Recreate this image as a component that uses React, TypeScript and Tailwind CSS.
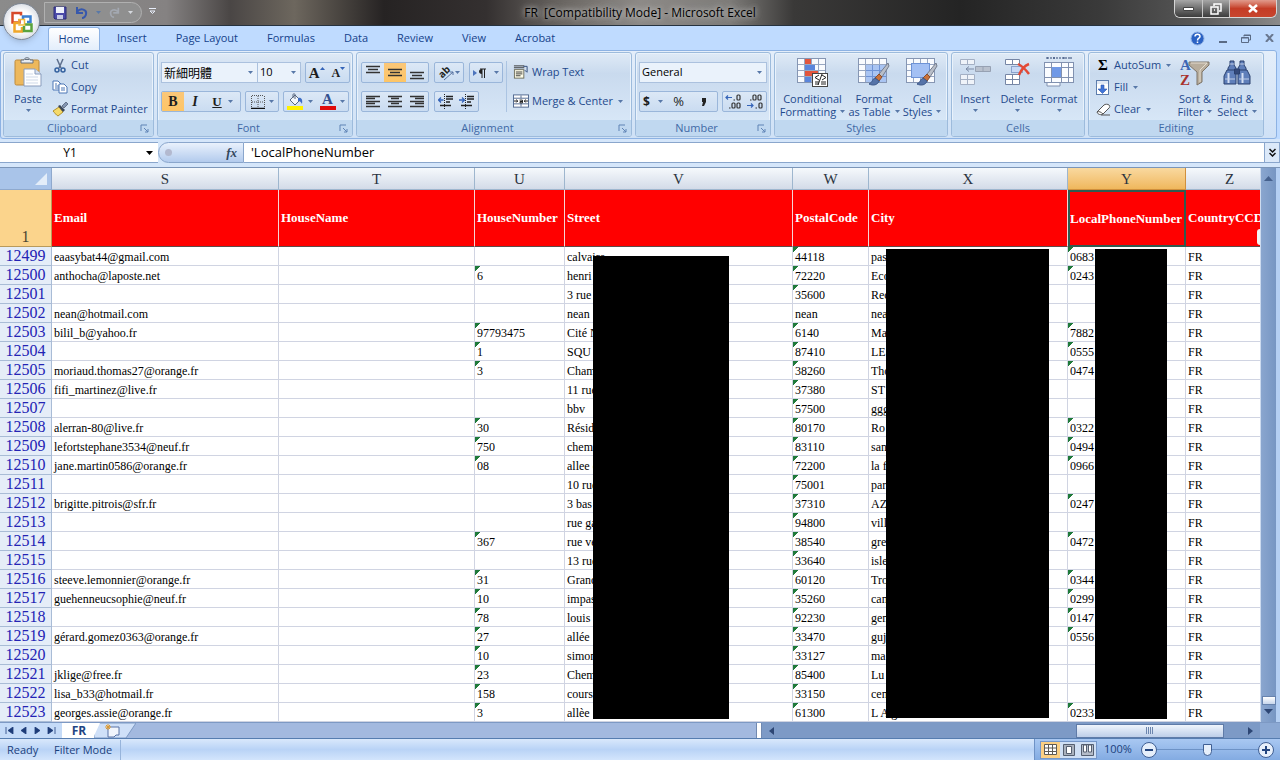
import { ReactNode } from 'react';

interface Row {
  n: number;
  email: string;
  house: string;
  street: string;
  postal: string;
  city: string;
  phone: string;
}

const TABS = ['Insert', 'Page Layout', 'Formulas', 'Data', 'Review', 'View', 'Acrobat'];

const COLUMNS = [
  { letter: 'S', name: 'Email' },
  { letter: 'T', name: 'HouseName' },
  { letter: 'U', name: 'HouseNumber' },
  { letter: 'V', name: 'Street' },
  { letter: 'W', name: 'PostalCode' },
  { letter: 'X', name: 'City' },
  { letter: 'Y', name: 'LocalPhoneNumber' },
  { letter: 'Z', name: 'CountryCCD' },
];

const ROWS: Row[] = [
  { n: 12499, email: 'eaasybat44@gmail.com', house: '', street: 'calvaire', postal: '44118', city: 'pas', phone: '0683' },
  { n: 12500, email: 'anthocha@laposte.net', house: '6', street: 'henri', postal: '72220', city: 'Eco', phone: '0243' },
  { n: 12501, email: '', house: '', street: '3 rue', postal: '35600', city: 'Rec', phone: '' },
  { n: 12502, email: 'nean@hotmail.com', house: '', street: 'nean', postal: 'nean', city: 'nea', phone: '' },
  { n: 12503, email: 'bilil_b@yahoo.fr', house: '97793475', street: 'Cité N', postal: '6140', city: 'Ma', phone: '7882' },
  { n: 12504, email: '', house: '1', street: 'SQU', postal: '87410', city: 'LE', phone: '0555' },
  { n: 12505, email: 'moriaud.thomas27@orange.fr', house: '3', street: 'Cham', postal: '38260', city: 'Tho', phone: '0474' },
  { n: 12506, email: 'fifi_martinez@live.fr', house: '', street: '11 rue', postal: '37380', city: 'ST', phone: '' },
  { n: 12507, email: '', house: '', street: 'bbv', postal: '57500', city: 'ggg', phone: '' },
  { n: 12508, email: 'alerran-80@live.fr', house: '30', street: 'Résid', postal: '80170', city: 'Ro', phone: '0322' },
  { n: 12509, email: 'lefortstephane3534@neuf.fr', house: '750', street: 'chem', postal: '83110', city: 'san', phone: '0494' },
  { n: 12510, email: 'jane.martin0586@orange.fr', house: '08', street: 'allee d', postal: '72200', city: 'la f', phone: '0966' },
  { n: 12511, email: '', house: '', street: '10 rue', postal: '75001', city: 'par', phone: '' },
  { n: 12512, email: 'brigitte.pitrois@sfr.fr', house: '', street: '3 bas', postal: '37310', city: 'AZ', phone: '0247' },
  { n: 12513, email: '', house: '', street: 'rue ga', postal: '94800', city: 'vill', phone: '' },
  { n: 12514, email: '', house: '367', street: 'rue ve', postal: '38540', city: 'gre', phone: '0472' },
  { n: 12515, email: '', house: '', street: '13 rue', postal: '33640', city: 'isle', phone: '' },
  { n: 12516, email: 'steeve.lemonnier@orange.fr', house: '31', street: 'Grand', postal: '60120', city: 'Tro', phone: '0344' },
  { n: 12517, email: 'guehenneucsophie@neuf.fr', house: '10', street: 'impas', postal: '35260', city: 'can', phone: '0299' },
  { n: 12518, email: '', house: '78', street: 'louis', postal: '92230', city: 'gen', phone: '0147' },
  { n: 12519, email: 'gérard.gomez0363@orange.fr', house: '27', street: 'allée', postal: '33470', city: 'guj', phone: '0556' },
  { n: 12520, email: '', house: '10', street: 'simon', postal: '33127', city: 'ma', phone: '' },
  { n: 12521, email: 'jklige@free.fr', house: '23', street: 'Chem', postal: '85400', city: 'Lu', phone: '' },
  { n: 12522, email: 'lisa_b33@hotmail.fr', house: '158', street: 'cours', postal: '33150', city: 'cen', phone: '' },
  { n: 12523, email: 'georges.assie@orange.fr', house: '3', street: 'allèe', postal: '61300', city: 'L A g', phone: '0233' },
];

function Arrow({ className = '' }: { className?: string }) {
  return (
    <svg viewBox="0 0 5 3" className={`w-[5px] h-[3px] shrink-0 fill-[#5878a8] ${className}`}>
      <path d="M0 0h5L2.500 3z" />
    </svg>
  );
}

function Group({ title, width, launcher, children }: { title: string; width: string; launcher?: boolean; children: ReactNode }) {
  return (
    <section
      className={`${width} shrink-0 h-[85px] flex flex-col rounded-[3px] border border-[#9dbbdc] bg-linear-to-b from-[#dfeaf6] from-0% via-[#c9daee] via-25% to-[#dcebfa] shadow-[inset_0_0_0_1px_#e9f2fb] overflow-hidden`}
    >
      <div className="flex-1 flex min-h-0">{children}</div>
      <div className="h-4 shrink-0 bg-[#c0d8f0] flex items-center text-[#3f69a6] text-[11px] leading-4">
        <span className="flex-1 text-center">{title}</span>
        {launcher && (
          <button aria-label={`${title} options`} className="mr-1">
            <svg viewBox="0 0 9 9" className="w-[9px] h-[9px]" fill="none" stroke="#5f83b5">
              <path d="M1 7V1h6M4 4l4 4M8 5v3H5" />
            </svg>
          </button>
        )}
      </div>
    </section>
  );
}

function Box({ width, children }: { width: string; children: ReactNode }) {
  return (
    <div className={`${width} h-[21px] shrink-0 flex rounded-[2px] border border-[#9ab6da] bg-linear-to-b from-[#dce8f6] to-[#cadcf1] overflow-hidden`}>
      {children}
    </div>
  );
}

function Tool({ label, on, children }: { label: string; on?: boolean; children: ReactNode }) {
  return (
    <button
      aria-label={label}
      className={`flex-1 flex items-center justify-center gap-1 text-[#1e1e1e] ${on ? 'bg-linear-to-b from-[#fbc778] to-[#fdc566]' : ''}`}
    >
      {children}
    </button>
  );
}

function Lines({ kind }: { kind: 'top' | 'middle' | 'bottom' | 'left' | 'center' | 'right' }) {
  const d = {
    top: 'M1 1.500h14M3 4.500h10M1 7.500h14',
    middle: 'M1 4.500h14M3 7.500h10M1 10.500h14',
    bottom: 'M1 7.500h14M3 10.500h10M1 13.500h14',
    left: 'M1 2.500h14M1 4.500h9M1 7.500h14M1 9.500h9M1 12.500h14',
    center: 'M1 2.500h14M4 4.500h8M1 7.500h14M4 9.500h8M1 12.500h14',
    right: 'M1 2.500h14M6 4.500h9M1 7.500h14M6 9.500h9M1 12.500h14',
  }[kind];
  return (
    <svg viewBox="0 0 16 15" className="w-4 h-[15px]" stroke="#333" strokeWidth="1.300">
      <path d={d} />
    </svg>
  );
}

function Indent({ flip }: { flip?: boolean }) {
  return (
    <svg viewBox="0 0 16 15" className="w-4 h-[15px]" fill="none" stroke="#222">
      <path d="M8 2.500h7M8 5h7M8 8h4M2 11.500h11" strokeWidth="1.500" />
      <path d="M6.500 0v15" strokeDasharray="1 1" />
      <path d={flip ? 'M0 6h5M3 3.500L5.500 6 3 8.500' : 'M5.500 6H1M3 3.500L.5 6 3 8.500'} stroke="#3564b8" strokeWidth="1.300" />
    </svg>
  );
}

function BigButton({ icon, lines, arrowBelow, width }: { icon: ReactNode; lines: string[]; arrowBelow?: boolean; width: string }) {
  return (
    <button className={`${width} shrink-0 flex flex-col items-center pt-[3px] text-[11px] leading-[13px] text-[#1f4a8d] whitespace-nowrap`}>
      <span className="h-8 mb-1 flex items-center justify-center">{icon}</span>
      {lines.map((line, i) => (
        <span key={line} className="flex items-center gap-1">
          {line}
          {!arrowBelow && i === lines.length - 1 && <Arrow />}
        </span>
      ))}
      {arrowBelow && <Arrow className="mt-1" />}
    </button>
  );
}

function SmallButton({ icon, label, arrow }: { icon: ReactNode; label: string; arrow?: boolean }) {
  return (
    <button className="h-[22px] flex items-center gap-[3px] text-[11px] text-[#1f4a8d] whitespace-nowrap">
      <span className="w-4 flex justify-center shrink-0">{icon}</span>
      {label}
      {arrow && <Arrow className="ml-0.5" />}
    </button>
  );
}

function PasteIcon() {
  return (
    <svg viewBox="0 0 28 32" className="w-7 h-8">
      <rect x="1" y="4" width="24" height="25" rx="1.500" fill="#edb85c" stroke="#bd8a3c" />
      <path d="M7 7V4h3c0-3 6-3 6 0h3v3z" fill="#e6ebf1" stroke="#66717f" />
      <path d="M11 3.500h4" stroke="#66717f" />
      <path d="M10 13h11l6 5v12H10z" fill="#fdfeff" stroke="#8a9dbd" />
      <path d="M21 13v5h6" fill="#d7e1f1" stroke="#8a9dbd" />
      <path d="M12 18h7M12 21h12M12 24h12M12 27h12" stroke="#cfd9e8" />
    </svg>
  );
}

function CutIcon() {
  return (
    <svg viewBox="0 0 14 15" className="w-[14px] h-[15px]" fill="none" stroke="#34619e">
      <path d="M4 1l4 9M10 1L6 10" strokeWidth="1.500" stroke="#5d6f8c" />
      <circle cx="4" cy="12" r="2" strokeWidth="1.500" />
      <circle cx="10" cy="12" r="2" strokeWidth="1.500" />
    </svg>
  );
}

function CopyIcon() {
  return (
    <svg viewBox="0 0 16 14" className="w-4 h-[14px]" fill="#fff" stroke="#4d76b5">
      <path d="M1 1h5l3 3v6H1z" />
      <path d="M3 4h2M3 6h4M3 8h4" />
      <path d="M7 4h5l3 3v6H7z" />
      <path d="M9 8h4M9 10h4" />
    </svg>
  );
}

function PainterIcon() {
  return (
    <svg viewBox="0 0 16 15" className="w-4 h-[15px]">
      <path d="M1 9l6-4 4 5-5 4c-2-1-3-3-5-5z" fill="#f5da6a" stroke="#b0902e" />
      <path d="M6 4l2-1 5 5-2 2z" fill="#3c4657" />
      <path d="M10 4l4-4 2 2-4 4z" fill="#8496b2" stroke="#46546b" strokeWidth=".7" />
    </svg>
  );
}

function BordersIcon() {
  return (
    <svg viewBox="0 0 14 14" className="w-[14px] h-[14px]" fill="none" stroke="#555">
      <path d="M.5 1v12M7 1v12M13.500 1v12M1 .5h12M1 7h12" strokeDasharray="1 1" />
      <path d="M0 13.500h14" stroke="#111" strokeWidth="1.500" />
    </svg>
  );
}

function FillColorIcon() {
  return (
    <svg viewBox="0 0 17 17" className="w-[17px] h-[17px]">
      <path d="M3 7l5-5 5 5-5 5z" fill="#f2f6fb" stroke="#58677e" />
      <path d="M6 5V1.500C6 .5 8 .5 8 1.500V6" fill="none" stroke="#58677e" />
      <path d="M11 5c3-1 5 1 4 6-1-2-2-3-4-3z" fill="#3c6cc4" />
      <rect y="13" width="16" height="4" fill="#fff200" />
    </svg>
  );
}

function GridBase() {
  return (
    <>
      <rect x=".5" y="1.500" width="28" height="24" fill="#f9fbfe" stroke="#8696b3" />
      <path d="M7.500 2v23M14.500 2v23M21.500 2v23M1 7.500h27M1 13.500h27M1 19.500h27" stroke="#98a7c2" />
    </>
  );
}

function Brush() {
  return (
    <>
      <path d="M30 6L21 17l3 3 7-11z" fill="#b9bec8" stroke="#747d8e" />
      <path d="M21 17l3 3-3 4-4-3z" fill="#c9723c" stroke="#8b4d29" />
      <path d="M17 21c-3 1-2 4-6 6 4 2 9 1 10-3z" fill="#5573a8" stroke="#3c5788" />
    </>
  );
}

function ConditionalIcon() {
  return (
    <svg viewBox="0 0 32 30" className="w-8 h-[30px]">
      <GridBase />
      <path d="M8 2h6v5H8zM8 14h13v5H8z" fill="#e2553d" />
      <path d="M8 8h10v5H8zM8 20h6v5H8z" fill="#5b86dc" />
      <rect x="15.500" y="16.500" width="15" height="13" fill="#fff" stroke="#444" />
      <path d="M22 18l-4 2.500 4 2.500M18 25h4M18 27h4M25 18l4 2.500-4 2.500M24 25h5M24 27h5M21 28l4-11" fill="none" stroke="#222" />
    </svg>
  );
}

function TableIcon() {
  return (
    <svg viewBox="0 0 32 30" className="w-8 h-[30px]">
      <GridBase />
      <path d="M8 8h20v17H8z" fill="#a9c4f2" />
      <path d="M8 13.500h20M8 19.500h20M14.500 8v17M21.500 8v17" stroke="#6e93d6" />
      <Brush />
    </svg>
  );
}

function StylesIcon() {
  return (
    <svg viewBox="0 0 32 30" className="w-8 h-[30px]">
      <GridBase />
      <rect x="5.500" y="6.500" width="18" height="14" fill="#a3c0f4" stroke="#6e93d6" />
      <Brush />
    </svg>
  );
}

function InsertIcon() {
  return (
    <svg viewBox="0 0 32 30" className="w-8 h-[30px]" fill="#eff3f9" stroke="#a4b0c4">
      <path d="M1.500 2.500h14v5h-14zM8.500 2.500v5M1.500 17.500h14v10h-14zM8.500 17.500v10M1.500 22.500h14" />
      <path d="M16.500 9.500h15v5h-15zM24 9.500v5" fill="#b9c1ce" stroke="#96a1b3" />
      <path d="M15 12H7M10 9.500L7 12l3 2.500" fill="none" stroke="#7a89a3" />
    </svg>
  );
}

function DeleteIcon() {
  return (
    <svg viewBox="0 0 28 30" className="w-7 h-[30px]" fill="#fff" stroke="#7686a5">
      <path d="M2.500 2.500h14v5h-14zM9.500 2.500v5M2.500 17.500h14v10h-14zM9.500 17.500v10M2.500 22.500h14" />
      <path d="M8.500 9.500h11v6h-11z" fill="#c6d8f6" stroke="#4b6aa5" strokeDasharray="1 1" />
      <path d="M15 7c4 2 8 6 11 10M26 7c-5 2-8 6-10 11" fill="none" stroke="#e34a36" strokeWidth="2.500" />
    </svg>
  );
}

function FormatIcon() {
  return (
    <svg viewBox="0 0 32 30" className="w-8 h-[30px]" fill="#fafcff" stroke="#8191b0">
      <path d="M4 1h24M4 0v3M28 0v3M11 0v3M21 0v3" stroke="#2e4674" strokeDasharray="2 1" />
      <rect x="1.500" y="5.500" width="29" height="20" />
      <path d="M8.500 6v19M18.500 6v19M25.500 6v19M2 10.500h28M2 20.500h28" />
      <rect x="9" y="10" width="9" height="10" fill="#6f98e6" stroke="none" />
      <path d="M4 26v3h13v-3" />
    </svg>
  );
}

function WrapIcon() {
  return (
    <svg viewBox="0 0 17 16" className="w-4 h-4" fill="#fffde8" stroke="#6e6e5c">
      <path d="M1 1.500h11M1 3.500h11" stroke="#333" />
      <rect x="1.500" y="5.500" width="10" height="9" />
      <path d="M3 8h7M3 10h7M3 12h5" stroke="#333" />
      <path d="M11 2h4v6M12.500 6L15 8.500" fill="none" stroke="#2f4a7a" />
    </svg>
  );
}

function MergeIcon() {
  return (
    <svg viewBox="0 0 17 15" className="w-4 h-[15px]" fill="#fff" stroke="#4f678f">
      <rect x=".5" y=".5" width="16" height="13" />
      <path d="M8.500 1v3M8.500 10v3M1 4h15M1 10h15" />
      <path d="M1 7h4M3.500 5.500L5 7 3.500 8.500M16 7h-4M13.500 5.500L12 7l1.500 1.500M7 6h3v3H7.500V7.500H10" fill="none" stroke="#111" />
    </svg>
  );
}

function FillIcon() {
  return (
    <svg viewBox="0 0 14 15" className="w-[14px] h-[15px]">
      <rect x=".5" y=".5" width="12" height="14" fill="#fff" stroke="#5d7dad" />
      <rect x="1" y="1" width="11" height="3" fill="#e1e9f5" />
      <path d="M5 5h3v4h3l-4.500 4.500L2 9h3z" fill="#3f74d9" stroke="#2c56a8" strokeWidth=".6" />
    </svg>
  );
}

function ClearIcon() {
  return (
    <svg viewBox="0 0 15 13" className="w-[15px] h-[13px]" stroke="#555">
      <path d="M1 9l7-7c1-1 4-1 5 0s1 2 0 3l-6 6c-2 1-5 1-6-2z" fill="#fff" />
      <path d="M1 9c2-1 4 0 6 2M5 12h9" fill="none" />
    </svg>
  );
}

function SortIcon() {
  return (
    <svg viewBox="0 0 32 32" className="w-8 h-8">
      <path d="M10 6h20v3l-7 7v10l-5 3V16l-8-7z" fill="#b8ad9c" stroke="#7d7468" />
      <path d="M12 7h16l-7 7v12" fill="none" stroke="#e3dccf" />
      <text x="1" y="14" fontSize="15" fontWeight="bold" fontFamily="Liberation Serif, serif" fill="#3d66b3">A</text>
      <text x="1" y="29" fontSize="15" fontWeight="bold" fontFamily="Liberation Serif, serif" fill="#a8322d">Z</text>
    </svg>
  );
}

function FindIcon() {
  return (
    <svg viewBox="0 0 28 28" className="w-7 h-7" fill="#5f7fba" stroke="#2a406e">
      <path d="M7 3h4v4l2 3v5H5v-5l2-3zM17 3h4v4l2 3v5h-8v-5l2-3z" />
      <path d="M4 12h8l1 3v11H1v-8zM16 12h8l3 6v8H15V15z" />
      <path d="M11.500 11h5v5h-5z" fill="#33497a" />
      <path d="M5.500 15v10M19.500 15v10" stroke="#d5e0f4" strokeWidth="2" />
      <path d="M2 21h10M16 21h10M7 6h4M17 6h4" stroke="#c1cfe8" />
    </svg>
  );
}

function OfficeOrb() {
  return (
    <button
      aria-label="Office Button"
      className="absolute left-[3px] top-[3px] z-10 w-[37px] h-[37px] rounded-full border border-[#7d8795] bg-radial from-white from-40% to-[#bfc6d2] flex items-center justify-center shadow-md"
    >
      <svg viewBox="0 0 24 24" className="w-6 h-6" fill="none" strokeWidth="2.500">
        <path d="M11 5.500V3H2.500v9.500h7V9" stroke="#d6492a" />
        <path d="M13 9V6.500h7.500V12H17" stroke="#3a7fd0" />
        <path d="M8 13H4.500v8.500H12V17" stroke="#f0a72a" />
        <path d="M15 14.500h6.500V21H14v-5" stroke="#5aa33d" />
        <path d="M9 9.500h5.500V15H9z" stroke="#f1bb3c" strokeWidth="1.500" />
      </svg>
    </button>
  );
}

function TitleBar() {
  return (
    <header className="h-[26px] flex items-start border-b border-[#26323f] bg-[linear-gradient(90deg,#8b8b8b_0%,#858282_13%,#4a4645_18%,#6d675e_23%,#262323_30%,#343030_38%,#6a6662_44%,#8d8a87_50%,#7d7b78_57%,#3a3938_62%,#242424_75%,#3a3a3a_86%,#555_93%,#8a8a8a_100%)]">
      <div className="flex-1 flex items-center">
        <div className="ml-11 mt-[2px] w-[98px] h-[21px] pl-2 flex items-center gap-2 rounded-r-full border border-[#b0b0b0] bg-[#8f8f8f]">
          <button aria-label="Save">
            <svg viewBox="0 0 14 14" className="w-[14px] h-[14px]">
              <path d="M1 1h12v12H2l-1-1z" fill="#4b4aa8" stroke="#2d2c78" />
              <path d="M3 1h8v6H3z" fill="#eef1fb" />
              <path d="M4 9h6v4H4z" fill="#c7cbe6" />
            </svg>
          </button>
          <button aria-label="Undo" className="flex items-center gap-2">
            <svg viewBox="0 0 13 13" className="w-[13px] h-[13px]" fill="none" stroke="#3758ac" strokeWidth="2">
              <path d="M2 1v6h6M2 6c4-5 10-2 9 2 0 2-2 4-4 4" />
            </svg>
            <Arrow />
          </button>
          <button aria-label="Redo" className="flex items-center gap-2">
            <svg viewBox="0 0 13 13" className="w-[11px] h-[13px]" fill="none" stroke="#a3a8b1" strokeWidth="2">
              <path d="M11 1v6H5M11 6C7 1 1 4 2 8c0 2 2 4 4 4" />
            </svg>
            <svg viewBox="0 0 5 3" className="w-[5px] h-[3px] fill-[#d5d8de]"><path d="M0 0h5L2.500 3z" /></svg>
          </button>
        </div>
        <button aria-label="Customize Quick Access Toolbar" className="ml-[7px]">
          <svg viewBox="0 0 7 7" className="w-[7px] h-[7px]" stroke="#e8eefa" fill="none">
            <path d="M0 .5h7M1 3l2.500 2.500L6 3z" />
          </svg>
        </button>
      </div>
      <h1 className="text-[12px] leading-[26px] text-black whitespace-pre [text-shadow:0_0_5px_#c8c8c8,0_0_8px_#bbb]">{'FR  [Compatibility Mode] - Microsoft Excel'}</h1>
      <div className="flex-1 flex justify-end">
        <div className="mr-[3px] h-[18px] flex rounded-b-md border border-t-0 border-[#d5d5d5] overflow-hidden">
          <button aria-label="Minimize" className="w-[28px] flex justify-center items-center bg-linear-to-b from-[#a7a7a7] to-[#3c3c3c] border-r border-[#c6c6c6]">
            <svg viewBox="0 0 11 4" className="w-[11px] h-1" fill="#fff" stroke="#444">
              <path d="M.5.5h10v3H.5z" />
            </svg>
          </button>
          <button aria-label="Restore" className="w-[27px] flex justify-center items-center bg-linear-to-b from-[#a7a7a7] to-[#3c3c3c] border-r border-[#c6c6c6]">
            <svg viewBox="0 0 12 12" className="w-3 h-3" fill="none" stroke="#fff" strokeWidth="1.500">
              <path d="M4 3V1h7v7H9M1 4h7v7H1zM4 7h1" />
            </svg>
          </button>
          <button aria-label="Close" className="w-[46px] flex justify-center items-center bg-linear-to-b from-[#e09a8c] via-[#c43c26] to-[#c8452d]">
            <svg viewBox="0 0 10 9" className="w-[10px] h-[9px]" stroke="#fff" strokeWidth="2.500">
              <path d="M1 1l8 7M9 1L1 8" />
            </svg>
          </button>
        </div>
      </div>
    </header>
  );
}

function TabStrip() {
  return (
    <nav className="h-6 flex items-end bg-[#bfdbff] text-[11px] text-[#15428b]">
      <button className="ml-12 w-[52px] h-[23px] rounded-t-[3px] border border-b-0 border-[#8db2e3] bg-linear-to-b from-white to-[#e3eefb] text-center">Home</button>
      <div className="flex-1 flex gap-[1px] ml-[3px]">
        {TABS.map((tab) => (
          <button key={tab} className="h-[23px] px-[14px]">
            {tab}
          </button>
        ))}
      </div>
      <div className="h-6 pr-[6px] flex items-center gap-[14px]">
        <button aria-label="Help">
          <svg viewBox="0 0 15 15" className="w-[15px] h-[15px]">
            <circle cx="7.500" cy="7.500" r="6.500" fill="#2b62c4" stroke="#8fb0e2" />
            <path d="M5 5.500c0-3 5-3 5 0 0 2-2.500 1.500-2.500 4M7.500 10.500V12" fill="none" stroke="#fff" strokeWidth="1.500" />
          </svg>
        </button>
        <button aria-label="Minimize workbook">
          <svg viewBox="0 0 8 10" className="w-2 h-[10px]" stroke="#5a6b85" strokeWidth="2">
            <path d="M0 9h8" />
          </svg>
        </button>
        <button aria-label="Restore workbook">
          <svg viewBox="0 0 10 9" className="w-[10px] h-[9px]" stroke="#5a6b85" fill="none">
            <path d="M3 2.500V1h6.500v5H8M.5 3.500h7v5h-7zM.5 4h7M3 1.500h6" />
          </svg>
        </button>
        <button aria-label="Close workbook">
          <svg viewBox="0 0 9 8" className="w-[9px] h-2" stroke="#6a7890" strokeWidth="2">
            <path d="M1 0l7 8M8 0L1 8" />
          </svg>
        </button>
      </div>
    </nav>
  );
}

function Ribbon() {
  return (
    <div className="h-[89px] mr-[3px] pt-[1px] px-[2px] flex gap-[3px] rounded-[3px] border border-[#8db2e3] bg-linear-to-b from-[#e4eefa] to-[#cfe1f6]">
      <Group title="Clipboard" width="w-[151px]" launcher>
        <BigButton width="w-[48px]" icon={<PasteIcon />} lines={['Paste']} arrowBelow />
        <div className="flex flex-col pt-[1px]">
          <SmallButton icon={<CutIcon />} label="Cut" />
          <SmallButton icon={<CopyIcon />} label="Copy" />
          <SmallButton icon={<PainterIcon />} label="Format Painter" />
        </div>
      </Group>

      <Group title="Font" width="w-[196px]" launcher>
        <div className="flex flex-col gap-2 pt-[9px] pl-[3px]">
          <div className="flex">
            <label className="relative flex items-center">
              <select
                aria-label="Font name"
                className="w-[97px] h-[21px] pl-[2px] appearance-none border border-[#abc1de] bg-[#eaf2fb] text-black text-[12px] font-['Noto_Sans_CJK_TC',sans-serif]"
              >
                <option>新細明體</option>
              </select>
              <Arrow className="absolute right-[5px] pointer-events-none" />
            </label>
            <label className="relative flex items-center">
              <select aria-label="Font size" className="w-[43px] h-[21px] pl-[2px] appearance-none border border-l-0 border-[#abc1de] bg-[#eaf2fb] text-black text-[11px]">
                <option>10</option>
              </select>
              <Arrow className="absolute right-[5px] pointer-events-none" />
            </label>
            <div className="ml-1">
              <Box width="w-[45px]">
                <Tool label="Grow font">
                  <span className="font-['Liberation_Serif',serif] font-bold text-[15px] leading-4">A</span>
                  <svg viewBox="0 0 5 3" className="w-[5px] h-[3px] -ml-1 mb-2 fill-[#3564b8]"><path d="M0 3h5L2.500 0z" /></svg>
                </Tool>
                <Tool label="Shrink font">
                  <span className="font-['Liberation_Serif',serif] font-bold text-[12px] leading-4">A</span>
                  <svg viewBox="0 0 5 3" className="w-[5px] h-[3px] -ml-1 mb-2 fill-[#3564b8]"><path d="M0 0h5L2.500 3z" /></svg>
                </Tool>
              </Box>
            </div>
          </div>
          <div className="flex gap-1">
            <Box width="w-[80px]">
              <Tool label="Bold" on>
                <b className="font-['Liberation_Serif',serif] text-[14px]">B</b>
              </Tool>
              <Tool label="Italic">
                <i className="font-['Liberation_Serif',serif] font-bold text-[14px]">I</i>
              </Tool>
              <Tool label="Underline">
                <u className="font-['Liberation_Serif',serif] font-bold text-[13px]">U</u>
              </Tool>
              <span className="w-3 flex items-center"><Arrow /></span>
            </Box>
            <Box width="w-[34px]">
              <Tool label="Borders"><BordersIcon /><Arrow /></Tool>
            </Box>
            <Box width="w-[66px]">
              <Tool label="Fill color"><FillColorIcon /><Arrow /></Tool>
              <Tool label="Font color">
                <span className="w-4 border-b-4 border-[#e00b0b] font-['Liberation_Serif',serif] font-bold text-[15px] leading-[13px] text-[#33508e]">A</span>
                <Arrow />
              </Tool>
            </Box>
          </div>
        </div>
      </Group>

      <Group title="Alignment" width="w-[276px]" launcher>
        <div className="flex flex-col gap-2 pt-[9px] pl-1">
          <div className="flex gap-[5px]">
            <Box width="w-[68px]">
              <Tool label="Top align"><Lines kind="top" /></Tool>
              <Tool label="Middle align" on><Lines kind="middle" /></Tool>
              <Tool label="Bottom align"><Lines kind="bottom" /></Tool>
            </Box>
            <Box width="w-[30px]">
              <Tool label="Orientation">
                <svg viewBox="0 0 17 17" className="w-[17px] h-[17px]">
                  <text x="1" y="11" fontSize="10" fontWeight="bold" fontFamily="Open Sans, sans-serif" transform="rotate(-45 7 9)" fill="#222">ab</text>
                  <path d="M6 16l9-8M15 11V8h-3" fill="none" stroke="#55719f" />
                </svg>
                <Arrow className="-ml-1" />
              </Tool>
            </Box>
            <Box width="w-[34px]">
              <Tool label="Text direction">
                <svg viewBox="0 0 13 10" className="w-[13px] h-[10px]">
                  <path d="M0 2v6l4-3z" fill="#4c74bd" />
                  <path d="M9 1v9M11.500 1v9M7 1h6" stroke="#222" />
                  <path d="M9 1c-4 0-4 5 0 5z" fill="#222" />
                </svg>
                <Arrow className="ml-1" />
              </Tool>
            </Box>
          </div>
          <div className="flex gap-[5px]">
            <Box width="w-[68px]">
              <Tool label="Align left"><Lines kind="left" /></Tool>
              <Tool label="Center"><Lines kind="center" /></Tool>
              <Tool label="Align right"><Lines kind="right" /></Tool>
            </Box>
            <Box width="w-[45px]">
              <Tool label="Decrease indent"><Indent /></Tool>
              <Tool label="Increase indent"><Indent flip /></Tool>
            </Box>
          </div>
        </div>
        <div className="ml-[3px] my-2 pl-[6px] border-l border-[#abc4e2] flex flex-col gap-[7px]">
          <SmallButton icon={<WrapIcon />} label="Wrap Text" />
          <SmallButton icon={<MergeIcon />} label="Merge & Center" arrow />
        </div>
      </Group>

      <Group title="Number" width="w-[136px]" launcher>
        <div className="flex flex-col gap-2 pt-[9px] pl-[3px]">
          <label className="relative flex items-center">
            <select aria-label="Number format" className="w-[128px] h-[21px] pl-[2px] appearance-none border border-[#abc1de] bg-[#eaf2fb] text-black text-[11px]">
              <option>General</option>
            </select>
            <Arrow className="absolute right-[5px] pointer-events-none" />
          </label>
          <div className="flex gap-1">
            <Box width="w-[79px]">
              <Tool label="Accounting format"><b className="text-[12px]">$</b><Arrow className="ml-1" /></Tool>
              <Tool label="Percent style"><span className="text-[13px]">%</span></Tool>
              <Tool label="Comma style">
                <svg viewBox="0 0 6 9" className="w-[6px] h-[9px]" fill="#222">
                  <path d="M1 1h4v4L3 9H1l1-4H1z" />
                </svg>
              </Tool>
            </Box>
            <Box width="w-[45px]">
              <Tool label="Increase decimal">
                <svg viewBox="0 0 18 19" className="w-[18px] h-[19px]" fill="none" stroke="#333" strokeWidth="1.200">
                  <path d="M8.500 8h1.500M4 16h1.500" />
                  <rect x="12" y="3" width="3" height="5" rx="1" />
                  <rect x="7" y="11" width="3" height="5" rx="1" />
                  <rect x="12" y="11" width="3" height="5" rx="1" />
                  <path d="M7 5.500H1M3 3.500l-2 2 2 2" stroke="#3564b8" />
                </svg>
              </Tool>
              <Tool label="Decrease decimal">
                <svg viewBox="0 0 18 19" className="w-[18px] h-[19px]" fill="none" stroke="#333" strokeWidth="1.200">
                  <path d="M4 8h1.500M9.500 16H11" />
                  <rect x="7" y="3" width="3" height="5" rx="1" />
                  <rect x="12" y="3" width="3" height="5" rx="1" />
                  <rect x="13" y="11" width="3" height="5" rx="1" />
                  <path d="M1 13.500h6M5 11.500l2 2-2 2" stroke="#3564b8" />
                </svg>
              </Tool>
            </Box>
          </div>
        </div>
      </Group>

      <Group title="Styles" width="w-[174px]">
        <BigButton width="w-[75px]" icon={<ConditionalIcon />} lines={['Conditional', 'Formatting']} />
        <BigButton width="w-[48px]" icon={<TableIcon />} lines={['Format', 'as Table']} />
        <BigButton width="w-[48px]" icon={<StylesIcon />} lines={['Cell', 'Styles']} />
      </Group>

      <Group title="Cells" width="w-[134px]">
        <BigButton width="w-[46px]" icon={<InsertIcon />} lines={['Insert']} arrowBelow />
        <BigButton width="w-[38px]" icon={<DeleteIcon />} lines={['Delete']} arrowBelow />
        <BigButton width="w-[46px]" icon={<FormatIcon />} lines={['Format']} arrowBelow />
      </Group>

      <Group title="Editing" width="w-[176px]">
        <div className="w-[85px] pl-[6px] pt-[1px] flex flex-col">
          <SmallButton icon={<span className="font-['Liberation_Serif',serif] font-bold text-[15px] text-black">Σ</span>} label="AutoSum" arrow />
          <SmallButton icon={<FillIcon />} label="Fill" arrow />
          <SmallButton icon={<ClearIcon />} label="Clear" arrow />
        </div>
        <BigButton width="w-[42px]" icon={<SortIcon />} lines={['Sort &', 'Filter']} />
        <BigButton width="w-[42px]" icon={<FindIcon />} lines={['Find &', 'Select']} />
      </Group>
    </div>
  );
}

function FormulaBar() {
  return (
    <div className="h-[29px] pt-[3px] pb-1 flex border-b border-[#7b95b8] bg-[#d5e6fa]">
      <div className="w-[158px] shrink-0 flex items-center border-y border-[#8aa6cc] bg-white">
        <input aria-label="Name box" defaultValue="Y1" className="w-[140px] text-center text-[12px] outline-none" />
        <svg viewBox="0 0 7 4" className="w-[7px] h-1 ml-1.5"><path d="M0 0h7L3.500 4z" /></svg>
      </div>
      <div className="w-[86px] shrink-0 px-1.5 flex items-center justify-between rounded-l-full border border-[#8aa6cc] bg-linear-to-b from-[#e9f1fc] to-[#b3cbed]">
        <span className="w-[7px] h-[7px] rounded-full bg-[#b3b9cf]" />
        <i className="font-['Liberation_Serif',serif] font-bold text-[13px] text-[#33475e]">fx</i>
      </div>
      <input aria-label="Formula" defaultValue="'LocalPhoneNumber" className="flex-1 min-w-0 pl-[7px] border-y border-[#8aa6cc] bg-white text-[13px] outline-none" />
      <button aria-label="Expand formula bar" className="w-4 flex items-center justify-center border border-[#8aa6cc] bg-[#dce9f9]">
        <svg viewBox="0 0 7 9" className="w-[7px] h-[9px]" fill="none" stroke="#111" strokeWidth="1.500">
          <path d="M.5 1l3 3 3-3M.5 5l3 3 3-3" />
        </svg>
      </button>
    </div>
  );
}

function Cell({ text, marked }: { text: string; marked?: boolean }) {
  return (
    <td
      className={`h-[19px] pl-[2px] pt-[3px] leading-[15px] border-r border-b border-[#d0d4e2] overflow-hidden whitespace-nowrap ${
        marked ? 'bg-[linear-gradient(135deg,#1f7a3a_4px,#fff_4px)]' : 'bg-white'
      }`}
    >
      {text}
    </td>
  );
}

function Sheet() {
  return (
    <div className="flex-1 flex">
      <div className="relative flex-1 min-w-0 overflow-hidden bg-white">
        {/* Column Z runs on past the scroll bar */}
        <table className="w-[calc(100%+14px)] table-fixed border-separate border-spacing-0 text-left text-[12px] font-['Liberation_Serif',serif] text-black">
          <colgroup>
            <col className="w-[52px]" />
            <col className="w-[227px]" />
            <col className="w-[196px]" />
            <col className="w-[90px]" />
            <col className="w-[228px]" />
            <col className="w-[76px]" />
            <col className="w-[199px]" />
            <col className="w-[118px]" />
            <col />
          </colgroup>
          <thead>
            <tr className="text-[15px] text-[#2b3440]">
              <th className="h-[22px] p-0 border-r border-b border-[#8fa9cd] bg-[#a9c4e9]" aria-label="Select all">
                <svg viewBox="0 0 12 12" className="w-3 h-3 ml-auto mr-1 fill-[#e3edf9]"><path d="M12 0v12H0z" /></svg>
              </th>
              {COLUMNS.map((c) => (
                <th
                  key={c.letter}
                  className={`p-0 pt-[2px] leading-[19px] text-center font-normal border-r border-b ${
                    c.letter === 'Y'
                      ? 'border-[#d08f3c] bg-linear-to-b from-[#f9d99f] to-[#efb75c]'
                      : 'border-[#9eb6ce] bg-linear-to-b from-[#f6f9fc] to-[#d3dbe8]'
                  }`}
                >
                  {c.letter}
                </th>
              ))}
            </tr>
            <tr className="text-[13px] text-white">
              <th className="h-[57px] p-0 align-bottom text-center font-normal text-[16px] leading-[18px] text-[#4c4632] bg-[#fbd48c] border-r border-b border-[#b89a5c]">1</th>
              {COLUMNS.map((c) => (
                <th
                  key={c.name}
                  className={`py-0 pr-0 align-middle font-bold overflow-hidden whitespace-nowrap bg-[#ff0000] ${
                    c.letter === 'Y' ? 'pl-0 border-2 border-[#2f5b50]' : 'pl-[2px] border-r border-b border-r-[#f4d6d6] border-b-[#5e4a4a]'
                  }`}
                >
                  {c.name}
                </th>
              ))}
            </tr>
          </thead>
          <tbody>
            {ROWS.map((r) => (
              <tr key={r.n}>
                <th className="h-[19px] p-0 text-center font-normal text-[16px] leading-[18px] text-[#2323b4] bg-[#e5edf8] border-r border-b border-[#a9bcd6]">{r.n}</th>
                <Cell text={r.email} />
                <Cell text="" />
                <Cell text={r.house} marked={r.house !== ''} />
                <Cell text={r.street} />
                <Cell text={r.postal} marked={r.postal !== 'nean'} />
                <Cell text={r.city} />
                <Cell text={r.phone} marked={r.phone !== ''} />
                <Cell text="FR" />
              </tr>
            ))}
          </tbody>
        </table>
        {/* Redaction blocks */}
        <div className="absolute left-[593px] top-[88px] bottom-[3px] w-[136px] bg-black" />
        <div className="absolute left-[886px] top-[81px] bottom-1 w-[163px] bg-black" />
        <div className="absolute left-[1095px] top-[81px] bottom-[3px] w-[72px] bg-black" />
        {/* Edge of the filter button */}
        <div className="absolute right-0 top-[61px] w-[3px] h-4 rounded-l-sm bg-[#f3f3f3]" />
      </div>
      <div className="w-4 shrink-0 py-2 flex flex-col items-center border-l border-[#cddbef] bg-linear-to-r from-[#8aa6cf] to-[#7796c3]">
        <svg viewBox="0 0 9 5" className="w-[9px] h-[5px] fill-[#46618e]"><path d="M0 5h9L4.500 0z" /></svg>
        <div className="flex-1" />
        <div className="w-[14px] h-[9px] mb-1 border border-[#6783ae] bg-linear-to-b from-white to-[#c7d6ec]" />
        <svg viewBox="0 0 9 5" className="w-[9px] h-[5px] fill-[#2d4674]"><path d="M0 0h9L4.500 5z" /></svg>
      </div>
      <div className="w-1 shrink-0 bg-[#b4cff3]" />
    </div>
  );
}

function SheetTabs() {
  const nav = [
    { label: 'First sheet', d: 'M1 0v7M8 0v7L3 3.500z' },
    { label: 'Previous sheet', d: 'M7 0v7L2 3.500z' },
    { label: 'Next sheet', d: 'M2 0v7l5-3.500z' },
    { label: 'Last sheet', d: 'M8 0v7M1 0v7l5-3.500z' },
  ];
  return (
    <div className="h-4 flex border-t border-[#7d99c4] bg-[#a3b9df]">
      <div className="w-[62px] shrink-0 pl-[2px] pr-1 flex items-center justify-around bg-[#c5dbf8]">
        {nav.map((item) => (
          <button key={item.label} aria-label={item.label}>
            <svg viewBox="0 0 9 7" className="w-[9px] h-[7px]" fill="#1e3c78" stroke="#1e3c78" strokeWidth=".8"><path d={item.d} /></svg>
          </button>
        ))}
      </div>
      <button className="w-[32px] shrink-0 pl-0.5 bg-white text-[12px] leading-[15px] font-bold text-[#1f4583]">FR</button>
      <button aria-label="Insert worksheet" className="w-[42px] shrink-0">
        <svg viewBox="0 0 42 15" className="w-[42px] h-[15px]">
          <path d="M0 0h42L32 15H0z" fill="#cfe0f8" stroke="#7d99c4" />
          <path d="M0 0h6L0 13z" fill="#fff" />
          <path d="M14 4h11v8h-3l-2 2h-6z" fill="#f1f5fc" stroke="#5873a6" />
          <path d="M14 1v6M11 4h6M12 2l4 4M16 2l-4 4" stroke="#e09a2c" />
        </svg>
      </button>
      <div className="flex-1" />
      <div className="w-[6px] border-x border-[#7189b0] bg-white" />
      <div className="w-[498px] shrink-0 px-[7px] flex items-center bg-[#7d9ac6]">
        <svg viewBox="0 0 5 8" className="w-[5px] h-2 fill-[#2d4674]"><path d="M5 0v8L0 4z" /></svg>
        <div className="flex-1" />
        <div className="w-[148px] h-[14px] mr-6 flex items-center justify-center gap-[1px] border border-[#5f7ba8] bg-linear-to-b from-[#f0f5fc] to-[#bdcee8]">
          <span className="w-2 h-[7px] bg-[repeating-linear-gradient(90deg,#6c85ad_0_1px,transparent_1px_2px)]" />
        </div>
        <svg viewBox="0 0 5 8" className="w-[5px] h-2 fill-[#2d4674]"><path d="M0 0v8l5-4z" /></svg>
      </div>
      <div className="w-5 shrink-0 bg-[#8ba8d3]" />
    </div>
  );
}

function StatusBar() {
  return (
    <footer className="h-[22px] flex items-center border-t border-[#567db0] bg-linear-to-b from-[#d9e8fb] via-[#b9d3f6] to-[#d3e5fc] text-[11px] text-[#1a3f7c]">
      <span className="ml-[7px] w-[47px] h-5 leading-5">Ready</span>
      <span className="pr-2 h-5 leading-5 border-r border-[#97b4db]">Filter Mode</span>
      <div className="flex-1" />
      <div className="self-stretch pl-[5px] pr-1.5 flex items-center border-l border-[#6e92c6] bg-linear-to-b from-[#a9c8f2] to-[#83abe2]">
        <div className="flex h-[18px] mr-[7px] border border-[#7496c8] bg-[#cfdff4]">
          <button aria-label="Normal view" className="w-[19px] flex items-center justify-center bg-[#fbcf83]">
            <svg viewBox="0 0 13 11" className="w-[13px] h-[11px]" fill="#fff" stroke="#5d5a55">
              <path d="M.5.5h12v10H.5zM4.500 1v9M8.500 1v9M1 4h11M1 7.500h11" />
            </svg>
          </button>
          <button aria-label="Page layout view" className="w-[18px] flex items-center justify-center">
            <svg viewBox="0 0 12 12" className="w-3 h-3" fill="#a9b1bd" stroke="#555f70">
              <path d="M.5.5h11v11H.5z" />
              <path d="M3.500 2.500h5v7h-5z" fill="#fff" />
            </svg>
          </button>
          <button aria-label="Page break preview" className="w-[18px] flex items-center justify-center">
            <svg viewBox="0 0 13 12" className="w-[13px] h-3" fill="#fff" stroke="#555f70">
              <path d="M.5.5h12v11H.5z" fill="#b4bcc9" />
              <path d="M2.500 1h3v7h-3zM7.500 1h3v7h-3z" />
            </svg>
          </button>
        </div>
        <span className="w-[37px]">100%</span>
        <button aria-label="Zoom out" className="w-4 h-4 flex items-center justify-center rounded-full border border-[#3f5f94] bg-[#e6effb]">
          <svg viewBox="0 0 8 8" className="w-2 h-2" stroke="#23457f" strokeWidth="2"><path d="M0 4h8" /></svg>
        </button>
        <input
          type="range"
          aria-label="Zoom"
          defaultValue={50}
          className="w-[101px] h-3 appearance-none bg-[linear-gradient(#6d92c6,#6d92c6)] bg-[length:100%_1px] bg-center bg-no-repeat [&::-webkit-slider-thumb]:appearance-none [&::-webkit-slider-thumb]:w-[9px] [&::-webkit-slider-thumb]:h-3 [&::-webkit-slider-thumb]:rounded-b-full [&::-webkit-slider-thumb]:border [&::-webkit-slider-thumb]:border-[#3f5f94] [&::-webkit-slider-thumb]:bg-[#e6effb]"
        />
        <button aria-label="Zoom in" className="w-4 h-4 flex items-center justify-center rounded-full border border-[#3f5f94] bg-[#e6effb]">
          <svg viewBox="0 0 8 8" className="w-2 h-2" stroke="#23457f" strokeWidth="2"><path d="M0 4h8M4 0v8" /></svg>
        </button>
      </div>
    </footer>
  );
}

export default function App() {
  return (
    <div className="relative min-h-screen flex flex-col overflow-hidden bg-[#bfdbff] font-['Open_Sans',sans-serif]">
      <OfficeOrb />
      <TitleBar />
      <TabStrip />
      <Ribbon />
      <FormulaBar />
      <Sheet />
      <SheetTabs />
      <StatusBar />
    </div>
  );
}
